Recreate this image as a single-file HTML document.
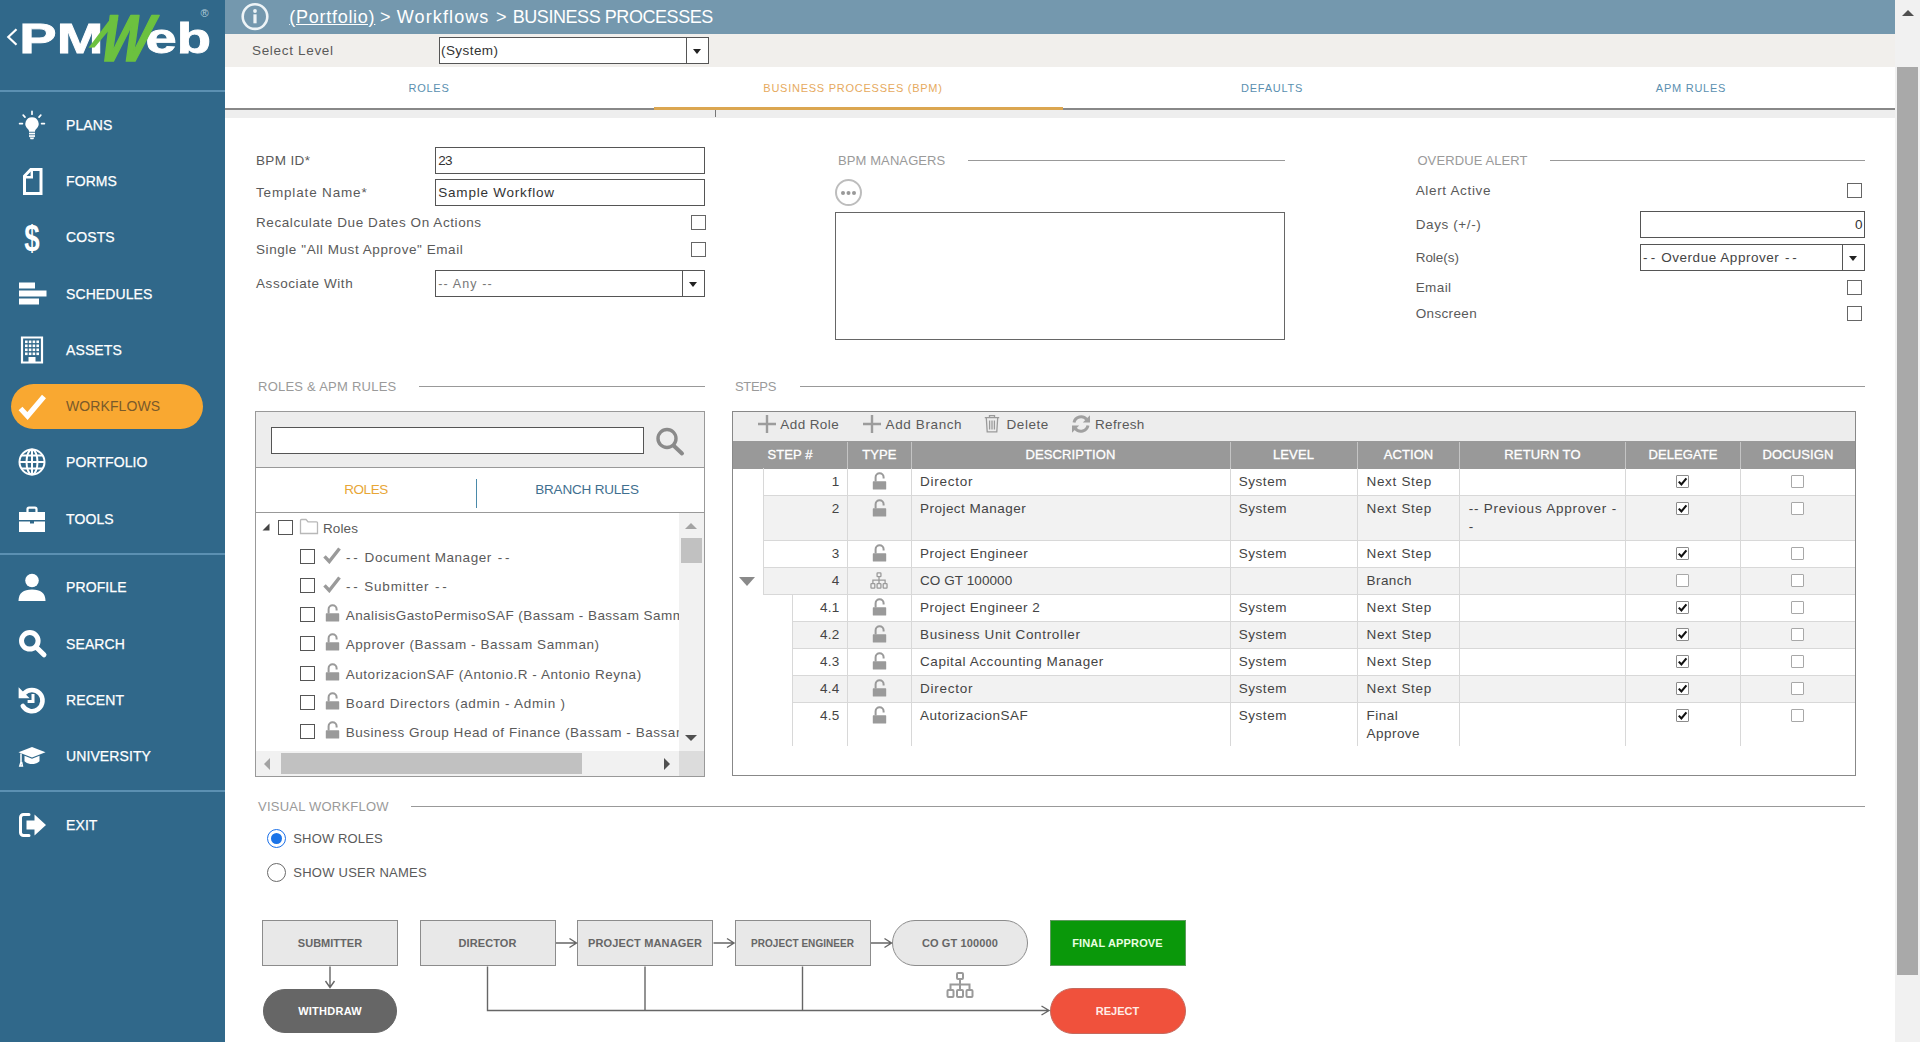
<!DOCTYPE html>
<html lang="en">
<head>
<meta charset="utf-8">
<title>PMWeb - Business Processes</title>
<style>
*{box-sizing:border-box;margin:0;padding:0}
html,body{width:1920px;height:1042px;overflow:hidden;background:#fff;font-family:"Liberation Sans",sans-serif;color:#555}
.abs,.abs-all *{position:absolute}
#page{position:relative;width:1920px;height:1042px;overflow:hidden}
/* ---------- sidebar ---------- */
#side{position:absolute;left:0;top:0;width:225px;height:1042px;background:#30688a}
#side .div{position:absolute;left:0;width:225px;height:2px;background:#5b90b2}
#side .it{position:absolute;left:0;width:225px;height:44px;color:#fff;font-size:14px;line-height:44px;letter-spacing:.1px}
#side .it span{position:absolute;left:66px;top:0;white-space:nowrap;-webkit-text-stroke:.25px #fff}
#side .it svg{position:absolute;left:16px;top:6px;width:32px;height:32px}
#side .act{left:11px;width:192px;height:45px;border-radius:23px;background:#f9a831}
#side .act span{left:55px;color:#7a5a2a;-webkit-text-stroke:0}
#side .act svg{left:5px}
/* ---------- header ---------- */
#hdr{position:absolute;left:225px;top:0;width:1670px;height:34px;background:#7498ae}
#crumb{position:absolute;left:64px;top:0;height:34px;line-height:34px;color:#fff;font-size:18px;white-space:nowrap;letter-spacing:.55px}
#lvl{position:absolute;left:225px;top:34px;width:1670px;height:33px;background:#f1efec}
.t13{font-size:13px;letter-spacing:.55px;white-space:nowrap;color:#5a5a5a}
.lbl{position:absolute;height:18px;line-height:18px}
.inp{position:absolute;border:1px solid #555;background:#fff;font-size:13px;color:#333;letter-spacing:.4px;white-space:nowrap;overflow:hidden}
.inp b{position:absolute;right:0;top:0;bottom:0;width:22px;border-left:1px solid #555;font-weight:normal}
.inp b:after{content:"";position:absolute;left:6px;top:50%;margin-top:-2px;border:4.5px solid transparent;border-top:5px solid #222;border-bottom:0}
.inp i{font-style:normal;position:absolute;left:3px;top:50%;transform:translateY(-50%)}
.cb{position:absolute;width:15px;height:15px;border:1px solid #666;background:#fff}
/* tabs */
#tabs{position:absolute;left:225px;top:67px;width:1670px;height:43px;background:#fff;border-bottom:2px solid #888}
#tabs span{position:absolute;top:13px;height:16px;line-height:16px;font-size:11px;letter-spacing:.75px;color:#5a8fb0;transform:translateX(-50%);white-space:nowrap}
#tabs .on{color:#e6aa5e}
#tabs u{position:absolute;left:429px;top:40px;width:409px;height:3px;background:#dba650}
#band{position:absolute;left:225px;top:110px;width:1670px;height:8px;background:#eee}
#band i{position:absolute;left:490px;top:0;width:1px;height:7px;background:#777}
/* page scrollbar */
#vsb{position:absolute;left:1895px;top:0;width:25px;height:1042px;background:#f1f1f1}
#vsb i{position:absolute;left:2px;top:67px;width:21px;height:908px;background:#a9a9a9}
#vsb b{position:absolute;left:7px;top:10px;border:6px solid transparent;border-bottom:6px solid #505050;border-top:0}
.tx{position:absolute;white-space:nowrap;height:18px;line-height:18px}
/* section titles */
.sec{position:absolute;font-size:13px;letter-spacing:.7px;color:#9a9a9a;white-space:nowrap;height:16px;line-height:16px}
.ln{position:absolute;height:1px;background:#999}
</style>
</head>
<body>
<div id="page">

<!-- ================= SIDEBAR ================= -->
<div id="side">
  <svg id="logo" style="position:absolute;left:0;top:0" width="225" height="80" viewBox="0 0 225 80">
    <path d="M16.500 29.200L8.300 37l8.200 7.800" fill="none" stroke="#fff" stroke-width="2.200"/>
    <text x="19.300" y="52.700" font-family="Liberation Sans, sans-serif" font-weight="bold" font-size="42" fill="#fff" stroke="#fff" stroke-width=".8" textLength="84" lengthAdjust="spacingAndGlyphs">PM</text>
    <text x="145.500" y="52.700" font-family="Liberation Sans, sans-serif" font-weight="bold" font-size="42" fill="#fff" stroke="#fff" stroke-width=".8" textLength="65.500" lengthAdjust="spacingAndGlyphs">eb</text>
    <path d="M88.500 47.800L112.500 16l6 3L94.500 47.500z" fill="#6cc13f"/>
    <text transform="translate(95.500 61.300) skewX(-18)" font-family="Liberation Sans, sans-serif" font-weight="bold" font-size="66" fill="#6cc13f" stroke="#6cc13f" stroke-width="1.600" stroke-linejoin="round" textLength="49" lengthAdjust="spacingAndGlyphs">W</text>
    <text x="200.500" y="17" font-family="Liberation Sans, sans-serif" font-size="11" fill="#b4ccda">®</text>
  </svg>
  <div class="it" style="top:103px"><svg viewBox="0 0 32 32"><g fill="#fff"><path d="M16 8.2a6.6 6.6 0 0 0-4.2 11.7c.8.7 1.2 1.5 1.2 2.4v.5h6v-.5c0-.9.4-1.7 1.2-2.4A6.600 6.600 0 0 0 16 8.200z"/><rect x="13" y="23.700" width="6" height="1.700"/><rect x="13" y="26.200" width="6" height="1.700"/><path d="M13.700 28.600h4.600l-.9 1.600h-2.800z"/></g><g stroke="#fff" stroke-width="1.700" stroke-linecap="round"><path d="M16 2.400v2.800M7.200 6.200l1.800 1.900M24.800 6.200l-1.800 1.900M3.600 14.600h2.800M25.600 14.600h2.800"/></g></svg><span>PLANS</span></div>
  <div class="it" style="top:159px"><svg viewBox="0 0 32 32"><path d="M14.800 4.500H25v24H8.500V11z" fill="none" stroke="#fff" stroke-width="3" stroke-linejoin="miter"/><path d="M15.800 4.500v7.800H8.500" fill="none" stroke="#fff" stroke-width="2.400"/></svg><span>FORMS</span></div>
  <div class="it" style="top:215px"><svg viewBox="0 0 32 32"><text x="8.300" y="29.500" font-family="Liberation Sans, sans-serif" font-weight="bold" font-size="36" fill="#fff" textLength="15.500" lengthAdjust="spacingAndGlyphs">$</text></svg><span>COSTS</span></div>
  <div class="it" style="top:272px"><svg viewBox="0 0 32 32"><g fill="#fff"><rect x="3" y="4.500" width="16" height="6"/><rect x="3" y="12.500" width="27.500" height="6"/><rect x="3" y="20.500" width="20" height="6"/></g></svg><span>SCHEDULES</span></div>
  <div class="it" style="top:328px"><svg viewBox="0 0 32 32"><path d="M6 3.500h20v25H6z" fill="none" stroke="#fff" stroke-width="2.200"/><g fill="#fff"><rect x="9" y="6.500" width="2.600" height="2.600"/><rect x="12.800" y="6.500" width="2.600" height="2.600"/><rect x="16.600" y="6.500" width="2.600" height="2.600"/><rect x="20.400" y="6.500" width="2.600" height="2.600"/><rect x="9" y="10.500" width="2.600" height="2.600"/><rect x="12.800" y="10.500" width="2.600" height="2.600"/><rect x="16.600" y="10.500" width="2.600" height="2.600"/><rect x="20.400" y="10.500" width="2.600" height="2.600"/><rect x="9" y="14.500" width="2.600" height="2.600"/><rect x="12.800" y="14.500" width="2.600" height="2.600"/><rect x="16.600" y="14.500" width="2.600" height="2.600"/><rect x="20.400" y="14.500" width="2.600" height="2.600"/><rect x="9" y="18.500" width="2.600" height="2.600"/><rect x="12.800" y="18.500" width="2.600" height="2.600"/><rect x="16.600" y="18.500" width="2.600" height="2.600"/><rect x="20.400" y="18.500" width="2.600" height="2.600"/><rect x="12.500" y="23" width="7" height="5"/></g></svg><span>ASSETS</span></div>
  <div class="it act" style="top:384px"><svg viewBox="0 0 32 32"><path d="M4.500 18.500l7 7.500L28 6.500" fill="none" stroke="#fff" stroke-width="5.200" stroke-linejoin="miter"/></svg><span>WORKFLOWS</span></div>
  <div class="it" style="top:440px"><svg viewBox="0 0 32 32"><g fill="none" stroke="#fff" stroke-width="2"><circle cx="16" cy="16" r="12.500"/><ellipse cx="16" cy="16" rx="5.500" ry="12.500"/><path d="M16 3.500v25M3.500 16h25M5.500 9.500h21M5.500 22.500h21"/></g></svg><span>PORTFOLIO</span></div>
  <div class="it" style="top:497px"><svg viewBox="0 0 32 32"><path d="M11.500 9V6.200a1.500 1.500 0 0 1 1.500-1.500h6a1.500 1.500 0 0 1 1.500 1.500V9" fill="none" stroke="#fff" stroke-width="2.200"/><path d="M3 9h26v8H3zM3 18.500h11v2h4v-2h11V29H3z" fill="#fff"/></svg><span>TOOLS</span></div>
  <div class="it" style="top:565px"><svg viewBox="0 0 32 32"><circle cx="16" cy="9.500" r="6.800" fill="#fff"/><path d="M2.500 30c0-8 5-11.500 13.500-11.500S29.500 22 29.500 30z" fill="#fff"/></svg><span>PROFILE</span></div>
  <div class="it" style="top:622px"><svg viewBox="0 0 32 32"><circle cx="13.800" cy="12.800" r="8.300" fill="none" stroke="#fff" stroke-width="5"/><path d="M20.500 19.500l7.500 7.300" stroke="#fff" stroke-width="5" stroke-linecap="round"/></svg><span>SEARCH</span></div>
  <div class="it" style="top:678px"><svg viewBox="0 0 32 32"><path d="M8 9.500A10.600 10.600 0 1 1 6.800 22" fill="none" stroke="#fff" stroke-width="4.600" stroke-linecap="round"/><path d="M2.600 3.200v11h11z" fill="#fff"/><path d="M17 10v7.400h-5.400" fill="none" stroke="#fff" stroke-width="3"/></svg><span>RECENT</span></div>
  <div class="it" style="top:734px"><svg viewBox="0 0 32 32"><path d="M16 7L2.500 12.200 16 17.400l13.500-5.200z" fill="#fff"/><path d="M8.500 15.800v5.400c2 2 4.600 2.800 7.500 2.800s5.500-.8 7.500-2.800v-5.400L16 18.800z" fill="#fff"/><path d="M5 13.500v8.500l-1.200 4h2.600L5.600 22" fill="none" stroke="#fff" stroke-width="1.500"/></svg><span>UNIVERSITY</span></div>
  <div class="it" style="top:803px"><svg viewBox="0 0 32 32"><path d="M13 5.500H7.500a3 3 0 0 0-3 3v15a3 3 0 0 0 3 3H13" fill="none" stroke="#fff" stroke-width="3" stroke-linecap="round"/><path d="M10.500 11.500h8v-6L30 16 18.500 26.500v-6h-8z" fill="#fff"/></svg><span>EXIT</span></div>
  <div class="div" style="top:90px"></div>
  <div class="div" style="top:553px"></div>
  <div class="div" style="top:790px"></div>
</div>

<!-- ================= HEADER ================= -->
<div id="hdr">
  <svg style="position:absolute;left:16px;top:3px" width="28" height="28" viewBox="0 0 28 28"><circle cx="14" cy="13.600" r="12.300" fill="none" stroke="#eef4f7" stroke-width="2.600"/><circle cx="14" cy="8" r="1.900" fill="#eef4f7"/><rect x="12.400" y="11.300" width="3.200" height="9" fill="#eef4f7"/></svg>
</div>
<div id="lvl"></div>

<div id="tabs">
  <span style="left:204px">ROLES</span>
  <span class="on" style="left:628px">BUSINESS PROCESSES (BPM)</span>
  <span style="left:1047px">DEFAULTS</span>
  <span style="left:1466px">APM RULES</span>
  <u></u>
</div>
<div id="band"><i></i></div>
<div id="vsb"><b></b><i></i></div>

<!-- breadcrumb -->
<div class="tx" style="left:289.2px;top:6px;font-size:18px;height:22px;line-height:22px;color:#fff;letter-spacing:0.74px;text-decoration:underline;">(Portfolio)</div>
<div class="tx" style="left:380px;top:6px;font-size:18px;height:22px;line-height:22px;color:#fff;letter-spacing:0.00px;">&gt;</div>
<div class="tx" style="left:396.8px;top:6px;font-size:18px;height:22px;line-height:22px;color:#fff;letter-spacing:1.11px;">Workflows</div>
<div class="tx" style="left:496px;top:6px;font-size:18px;height:22px;line-height:22px;color:#fff;letter-spacing:0.00px;">&gt;</div>
<div class="tx" style="left:512.7px;top:6px;font-size:18px;height:22px;line-height:22px;color:#fff;letter-spacing:-0.44px;">BUSINESS PROCESSES</div>
<!-- select level -->
<div class="tx" style="left:252px;top:42px;font-size:13.5px;color:#5a5a5a;letter-spacing:0.68px;">Select Level</div>
<div class="inp" style="left:439px;top:37px;width:270px;height:27px"><b></b></div>
<div class="tx" style="left:441px;top:42px;font-size:13.5px;color:#333;letter-spacing:0.43px;">(System)</div>
<!-- form -->
<div class="tx" style="left:256px;top:151.5px;font-size:13.5px;color:#5a5a5a;letter-spacing:0.37px;">BPM ID*</div>
<div class="tx" style="left:256px;top:183.5px;font-size:13.5px;color:#5a5a5a;letter-spacing:0.84px;">Template Name*</div>
<div class="tx" style="left:256px;top:213.5px;font-size:13.5px;color:#5a5a5a;letter-spacing:0.58px;">Recalculate Due Dates On Actions</div>
<div class="tx" style="left:256px;top:240.5px;font-size:13.5px;color:#5a5a5a;letter-spacing:0.57px;">Single "All Must Approve" Email</div>
<div class="tx" style="left:256px;top:274.5px;font-size:13.5px;color:#5a5a5a;letter-spacing:0.57px;">Associate With</div>
<div class="inp" style="left:435px;top:147px;width:270px;height:27px"></div>
<div class="tx" style="left:438.3px;top:151.5px;font-size:13.5px;color:#333;letter-spacing:-0.73px;">23</div>
<div class="inp" style="left:435px;top:179px;width:270px;height:27px"></div>
<div class="tx" style="left:438.3px;top:183.5px;font-size:13.5px;color:#333;letter-spacing:0.78px;">Sample Workflow</div>
<div class="cb" style="left:691px;top:215px"></div>
<div class="cb" style="left:691px;top:242px"></div>
<div class="inp" style="left:435px;top:270px;width:270px;height:27px"><b></b></div>
<div class="tx" style="left:438.3px;top:275px;font-size:12.5px;color:#777;letter-spacing:1.12px;">-- Any --</div>
<!-- bpm managers -->
<div class="tx" style="left:838px;top:151.5px;font-size:13px;color:#9a9a9a;letter-spacing:0.10px;">BPM MANAGERS</div>
<div class="ln" style="left:968px;top:160px;width:317px"></div>
<div style="position:absolute;left:835px;top:179px;width:27px;height:27px;border:2px solid #bdbdbd;border-radius:50%;background:#fff"><i style="position:absolute;left:4px;top:9.500px;width:4px;height:4px;border-radius:50%;background:#999;box-shadow:5.5px 0 0 #999,11px 0 0 #999"></i></div>
<div class="inp" style="left:835px;top:212px;width:450px;height:128px;border-color:#666"></div>
<!-- overdue alert -->
<div class="tx" style="left:1417.4px;top:151.5px;font-size:13px;color:#9a9a9a;letter-spacing:0.11px;">OVERDUE ALERT</div>
<div class="ln" style="left:1550px;top:160px;width:315px"></div>
<div class="tx" style="left:1415.7px;top:181.5px;font-size:13.5px;color:#5a5a5a;letter-spacing:0.66px;">Alert Active</div>
<div class="tx" style="left:1415.7px;top:215.5px;font-size:13.5px;color:#5a5a5a;letter-spacing:0.60px;">Days (+/-)</div>
<div class="tx" style="left:1415.7px;top:248.5px;font-size:13.5px;color:#5a5a5a;letter-spacing:-0.04px;">Role(s)</div>
<div class="tx" style="left:1415.7px;top:278.5px;font-size:13.5px;color:#5a5a5a;letter-spacing:0.41px;">Email</div>
<div class="tx" style="left:1415.7px;top:304.5px;font-size:13.5px;color:#5a5a5a;letter-spacing:0.35px;">Onscreen</div>
<div class="cb" style="left:1847px;top:183px"></div>
<div class="cb" style="left:1847px;top:280px"></div>
<div class="cb" style="left:1847px;top:306px"></div>
<div class="inp" style="left:1640px;top:211px;width:225px;height:27px"></div>
<div class="tx" style="right:57.5px;top:215.5px;font-size:13.5px;color:#333;letter-spacing:0.00px;">0</div>
<div class="inp" style="left:1640px;top:244px;width:225px;height:27px"><b></b></div>
<div class="tx" style="left:1643px;top:248.5px;font-size:13.5px;color:#444;letter-spacing:3.20px;">--</div>
<div class="tx" style="left:1661.2px;top:248.5px;font-size:13.5px;color:#444;letter-spacing:0.54px;">Overdue Approver</div>
<div class="tx" style="left:1785px;top:248.5px;font-size:13.5px;color:#444;letter-spacing:2.80px;">--</div>
<!-- roles & apm rules -->
<div class="tx" style="left:258px;top:377.5px;font-size:13px;color:#9a9a9a;letter-spacing:0.24px;">ROLES &amp; APM RULES</div>
<div class="ln" style="left:418.7px;top:386px;width:286.3px"></div>
<div style="position:absolute;left:255px;top:411px;width:450px;height:366px;border:1px solid #999;background:#fff"></div>
<div style="position:absolute;left:256px;top:412px;width:448px;height:56px;background:#ededed;border-bottom:1px solid #999"></div>
<div class="inp" style="left:271px;top:427px;width:373px;height:27px"></div>
<svg style="position:absolute;left:653px;top:425px" width="33" height="32" viewBox="0 0 33 32"><circle cx="14" cy="13.5" r="9" fill="none" stroke="#8a8a8a" stroke-width="3.4"/><path d="M20.5 20.5l8.500 8" stroke="#8a8a8a" stroke-width="4" stroke-linecap="round"/></svg>
<div class="tx" style="left:366px;transform:translateX(-50%);top:480.5px;font-size:13.5px;color:#e8a636;letter-spacing:-0.45px;">ROLES</div>
<div class="tx" style="left:587px;transform:translateX(-50%);top:480.5px;font-size:13.5px;color:#3f6f8f;letter-spacing:-0.19px;">BRANCH RULES</div>
<div style="position:absolute;left:476px;top:479px;width:1px;height:29px;background:#4a8aaa"></div>
<div style="position:absolute;left:256px;top:512px;width:448px;height:1px;background:#999"></div>
<svg style="position:absolute;left:262px;top:523px" width="8" height="8" viewBox="0 0 8 8"><path d="M7.500 .5v7h-7z" fill="#444"/></svg>
<div class="cb" style="left:278px;top:520px;border-color:#555"></div>
<svg style="position:absolute;left:299px;top:518px" width="20" height="17" viewBox="0 0 20 17"><path d="M1.500 15.500V2.500q0-1 1-1h4.500l2 2.300h8.500q1 0 1 1v10.700z" fill="#fff" stroke="#b8b8b8" stroke-width="1.300"/></svg>
<div class="tx" style="left:323px;top:519.5px;font-size:13.5px;color:#5a5a5a;letter-spacing:0.12px;">Roles</div>
<div style="position:absolute;left:256px;top:513px;width:423px;height:238px;overflow:hidden">
<div class="cb" style="left:44px;top:35.7px;border-color:#555"></div>
<svg style="position:absolute;left:67px;top:34.2px" width="18" height="17" viewBox="0 0 18 17"><path d="M1.500 9.300l4.800 5.200L16.500 1.500" fill="none" stroke="#9a9a9a" stroke-width="3.400"/></svg>
<div class="tx" style="left:90.1px;top:35.7px;font-size:13.5px;color:#5a5a5a;letter-spacing:2.70px;">--</div>
<div class="tx" style="left:108.6px;top:35.7px;font-size:13.5px;color:#5a5a5a;letter-spacing:0.54px;">Document Manager</div>
<div class="tx" style="left:241.7px;top:35.7px;font-size:13.5px;color:#5a5a5a;letter-spacing:2.70px;">--</div>
<div class="cb" style="left:44px;top:64.9px;border-color:#555"></div>
<svg style="position:absolute;left:67px;top:63.4px" width="18" height="17" viewBox="0 0 18 17"><path d="M1.500 9.300l4.800 5.200L16.500 1.500" fill="none" stroke="#9a9a9a" stroke-width="3.400"/></svg>
<div class="tx" style="left:90.1px;top:64.9px;font-size:13.5px;color:#5a5a5a;letter-spacing:2.70px;">--</div>
<div class="tx" style="left:108.2px;top:64.9px;font-size:13.5px;color:#5a5a5a;letter-spacing:0.83px;">Submitter</div>
<div class="tx" style="left:179.1px;top:64.9px;font-size:13.5px;color:#5a5a5a;letter-spacing:2.70px;">--</div>
<div class="cb" style="left:44px;top:94.1px;border-color:#555"></div>
<svg style="position:absolute;left:68.6px;top:91.1px" width="15" height="18" viewBox="0 0 15 18"><path d="M3.600 9.500V5.200a4 4 0 0 1 8 0V6.600" fill="none" stroke="#9a9a9a" stroke-width="2"/><rect x=".8" y="9.300" width="13.400" height="8.300" rx=".6" fill="#9a9a9a"/></svg>
<div class="tx" style="left:89.7px;top:94.1px;font-size:13.5px;color:#5a5a5a;letter-spacing:0.44px;">AnalisisGastoPermisoSAF (Bassam - Bassam Samman)</div>
<div class="cb" style="left:44px;top:123.3px;border-color:#555"></div>
<svg style="position:absolute;left:68.6px;top:120.3px" width="15" height="18" viewBox="0 0 15 18"><path d="M3.600 9.500V5.200a4 4 0 0 1 8 0V6.600" fill="none" stroke="#9a9a9a" stroke-width="2"/><rect x=".8" y="9.300" width="13.400" height="8.300" rx=".6" fill="#9a9a9a"/></svg>
<div class="tx" style="left:89.7px;top:123.3px;font-size:13.5px;color:#5a5a5a;letter-spacing:0.58px;">Approver (Bassam - Bassam Samman)</div>
<div class="cb" style="left:44px;top:152.5px;border-color:#555"></div>
<svg style="position:absolute;left:68.6px;top:149.5px" width="15" height="18" viewBox="0 0 15 18"><path d="M3.600 9.500V5.200a4 4 0 0 1 8 0V6.600" fill="none" stroke="#9a9a9a" stroke-width="2"/><rect x=".8" y="9.300" width="13.400" height="8.300" rx=".6" fill="#9a9a9a"/></svg>
<div class="tx" style="left:89.7px;top:152.5px;font-size:13.5px;color:#5a5a5a;letter-spacing:0.55px;">AutorizacionSAF (Antonio.R - Antonio Reyna)</div>
<div class="cb" style="left:44px;top:181.7px;border-color:#555"></div>
<svg style="position:absolute;left:68.6px;top:178.7px" width="15" height="18" viewBox="0 0 15 18"><path d="M3.600 9.500V5.200a4 4 0 0 1 8 0V6.600" fill="none" stroke="#9a9a9a" stroke-width="2"/><rect x=".8" y="9.300" width="13.400" height="8.300" rx=".6" fill="#9a9a9a"/></svg>
<div class="tx" style="left:89.7px;top:181.7px;font-size:13.5px;color:#5a5a5a;letter-spacing:0.73px;">Board Directors (admin - Admin )</div>
<div class="cb" style="left:44px;top:210.9px;border-color:#555"></div>
<svg style="position:absolute;left:68.6px;top:207.9px" width="15" height="18" viewBox="0 0 15 18"><path d="M3.600 9.500V5.200a4 4 0 0 1 8 0V6.600" fill="none" stroke="#9a9a9a" stroke-width="2"/><rect x=".8" y="9.300" width="13.400" height="8.300" rx=".6" fill="#9a9a9a"/></svg>
<div class="tx" style="left:89.7px;top:210.9px;font-size:13.5px;color:#5a5a5a;letter-spacing:0.54px;">Business Group Head of Finance (Bassam - Bassam Samman)</div>
</div>
<div style="position:absolute;left:679px;top:513px;width:25px;height:263px;background:#f1f1f1"></div>
<div style="position:absolute;left:681px;top:538px;width:21px;height:25px;background:#c1c1c1"></div>
<div style="position:absolute;left:685px;top:523px;border:6px solid transparent;border-top:0;border-bottom:6px solid #a3a3a3"></div>
<div style="position:absolute;left:685px;top:735px;border:6px solid transparent;border-bottom:0;border-top:6px solid #505050"></div>
<div style="position:absolute;left:256px;top:751px;width:423px;height:25px;background:#f1f1f1"></div>
<div style="position:absolute;left:281px;top:753px;width:301px;height:21px;background:#c1c1c1"></div>
<div style="position:absolute;left:264px;top:758px;border:6px solid transparent;border-left:0;border-right:6px solid #a3a3a3"></div>
<div style="position:absolute;left:664px;top:758px;border:6px solid transparent;border-right:0;border-left:6px solid #505050"></div>
<div style="position:absolute;left:679px;top:751px;width:25px;height:25px;background:#dcdcdc"></div>
<!-- steps -->
<div class="tx" style="left:735px;top:377.5px;font-size:13px;color:#9a9a9a;letter-spacing:-0.33px;">STEPS</div>
<div class="ln" style="left:800px;top:386px;width:1065px"></div>
<div style="position:absolute;left:732px;top:411px;width:1124px;height:365px;border:1px solid #888;background:#fff"></div>
<div style="position:absolute;left:733px;top:412px;width:1122px;height:29px;background:#ededed"></div>
<svg style="position:absolute;left:758px;top:415px" width="18" height="18" viewBox="0 0 18 18"><path d="M9 0v18M0 9h18" stroke="#9c9c9c" stroke-width="2.400"/></svg>
<div class="tx" style="left:780.3px;top:415.5px;font-size:13.5px;color:#5a5a5a;letter-spacing:0.41px;">Add Role</div>
<svg style="position:absolute;left:863px;top:415px" width="18" height="18" viewBox="0 0 18 18"><path d="M9 0v18M0 9h18" stroke="#9c9c9c" stroke-width="2.400"/></svg>
<div class="tx" style="left:885.6px;top:415.5px;font-size:13.5px;color:#5a5a5a;letter-spacing:0.61px;">Add Branch</div>
<svg style="position:absolute;left:984px;top:414px" width="16" height="19" viewBox="0 0 16 19"><g fill="none" stroke="#9a9a9a" stroke-width="1.300"><path d="M.8 3.600h14.400M5.500 3.400V1.600h5v1.800"/><path d="M2.300 3.800l.9 14h9.600l.9-14"/><path d="M5.600 6.500v9M8 6.500v9M10.400 6.500v9"/></g></svg>
<div class="tx" style="left:1006.5px;top:415.5px;font-size:13.5px;color:#5a5a5a;letter-spacing:0.57px;">Delete</div>
<svg style="position:absolute;left:1071px;top:414px" width="20" height="20" viewBox="0 0 20 20"><g fill="none" stroke="#a0a0a0" stroke-width="3"><path d="M3 8.500A7.200 7.200 0 0 1 15.600 5.400"/><path d="M17 11.500A7.200 7.200 0 0 1 4.400 14.600"/></g><path d="M19 1.200v7.200h-7.200z" fill="#a0a0a0"/><path d="M1 18.800v-7.200h7.200z" fill="#a0a0a0"/></svg>
<div class="tx" style="left:1095px;top:415.5px;font-size:13.5px;color:#5a5a5a;letter-spacing:0.35px;">Refresh</div>
<div style="position:absolute;left:733px;top:441px;width:1122px;height:28px;background:#999"></div>
<div style="position:absolute;left:847px;top:442px;width:1px;height:26px;background:#c4c4c4"></div>
<div style="position:absolute;left:911px;top:442px;width:1px;height:26px;background:#c4c4c4"></div>
<div style="position:absolute;left:1230px;top:442px;width:1px;height:26px;background:#c4c4c4"></div>
<div style="position:absolute;left:1357px;top:442px;width:1px;height:26px;background:#c4c4c4"></div>
<div style="position:absolute;left:1459px;top:442px;width:1px;height:26px;background:#c4c4c4"></div>
<div style="position:absolute;left:1625px;top:442px;width:1px;height:26px;background:#c4c4c4"></div>
<div style="position:absolute;left:1740px;top:442px;width:1px;height:26px;background:#c4c4c4"></div>
<div class="tx" style="left:790px;transform:translateX(-50%);top:445.5px;font-size:13px;color:#fff;letter-spacing:0.10px;-webkit-text-stroke:.3px #fff;">STEP #</div>
<div class="tx" style="left:879.4px;transform:translateX(-50%);top:445.5px;font-size:13px;color:#fff;letter-spacing:0.10px;-webkit-text-stroke:.3px #fff;">TYPE</div>
<div class="tx" style="left:1070.5px;transform:translateX(-50%);top:445.5px;font-size:13px;color:#fff;letter-spacing:0.10px;-webkit-text-stroke:.3px #fff;">DESCRIPTION</div>
<div class="tx" style="left:1293.5px;transform:translateX(-50%);top:445.5px;font-size:13px;color:#fff;letter-spacing:0.10px;-webkit-text-stroke:.3px #fff;">LEVEL</div>
<div class="tx" style="left:1408.5px;transform:translateX(-50%);top:445.5px;font-size:13px;color:#fff;letter-spacing:0.10px;-webkit-text-stroke:.3px #fff;">ACTION</div>
<div class="tx" style="left:1542.5px;transform:translateX(-50%);top:445.5px;font-size:13px;color:#fff;letter-spacing:0.10px;-webkit-text-stroke:.3px #fff;">RETURN TO</div>
<div class="tx" style="left:1683px;transform:translateX(-50%);top:445.5px;font-size:13px;color:#fff;letter-spacing:0.10px;-webkit-text-stroke:.3px #fff;">DELEGATE</div>
<div class="tx" style="left:1798px;transform:translateX(-50%);top:445.5px;font-size:13px;color:#fff;letter-spacing:0.10px;-webkit-text-stroke:.3px #fff;">DOCUSIGN</div>
<div style="position:absolute;left:763px;top:495px;width:1092px;height:45px;background:#f2f2f2"></div>
<div style="position:absolute;left:763px;top:567px;width:1092px;height:27px;background:#f2f2f2"></div>
<div style="position:absolute;left:792px;top:621px;width:1063px;height:27px;background:#f2f2f2"></div>
<div style="position:absolute;left:792px;top:675px;width:1063px;height:27px;background:#f2f2f2"></div>
<div style="position:absolute;left:763px;top:495px;width:1092px;height:1px;background:#d8d8d8"></div>
<div style="position:absolute;left:763px;top:468px;width:1px;height:27px;background:#d8d8d8"></div>
<div style="position:absolute;left:847px;top:468px;width:1px;height:27px;background:#d8d8d8"></div>
<div style="position:absolute;left:911px;top:468px;width:1px;height:27px;background:#d8d8d8"></div>
<div style="position:absolute;left:1230px;top:468px;width:1px;height:27px;background:#d8d8d8"></div>
<div style="position:absolute;left:1357px;top:468px;width:1px;height:27px;background:#d8d8d8"></div>
<div style="position:absolute;left:1459px;top:468px;width:1px;height:27px;background:#d8d8d8"></div>
<div style="position:absolute;left:1625px;top:468px;width:1px;height:27px;background:#d8d8d8"></div>
<div style="position:absolute;left:1740px;top:468px;width:1px;height:27px;background:#d8d8d8"></div>
<div style="position:absolute;left:763px;top:540px;width:1092px;height:1px;background:#d8d8d8"></div>
<div style="position:absolute;left:763px;top:495px;width:1px;height:45px;background:#d8d8d8"></div>
<div style="position:absolute;left:847px;top:495px;width:1px;height:45px;background:#d8d8d8"></div>
<div style="position:absolute;left:911px;top:495px;width:1px;height:45px;background:#d8d8d8"></div>
<div style="position:absolute;left:1230px;top:495px;width:1px;height:45px;background:#d8d8d8"></div>
<div style="position:absolute;left:1357px;top:495px;width:1px;height:45px;background:#d8d8d8"></div>
<div style="position:absolute;left:1459px;top:495px;width:1px;height:45px;background:#d8d8d8"></div>
<div style="position:absolute;left:1625px;top:495px;width:1px;height:45px;background:#d8d8d8"></div>
<div style="position:absolute;left:1740px;top:495px;width:1px;height:45px;background:#d8d8d8"></div>
<div style="position:absolute;left:763px;top:567px;width:1092px;height:1px;background:#d8d8d8"></div>
<div style="position:absolute;left:763px;top:540px;width:1px;height:27px;background:#d8d8d8"></div>
<div style="position:absolute;left:847px;top:540px;width:1px;height:27px;background:#d8d8d8"></div>
<div style="position:absolute;left:911px;top:540px;width:1px;height:27px;background:#d8d8d8"></div>
<div style="position:absolute;left:1230px;top:540px;width:1px;height:27px;background:#d8d8d8"></div>
<div style="position:absolute;left:1357px;top:540px;width:1px;height:27px;background:#d8d8d8"></div>
<div style="position:absolute;left:1459px;top:540px;width:1px;height:27px;background:#d8d8d8"></div>
<div style="position:absolute;left:1625px;top:540px;width:1px;height:27px;background:#d8d8d8"></div>
<div style="position:absolute;left:1740px;top:540px;width:1px;height:27px;background:#d8d8d8"></div>
<div style="position:absolute;left:763px;top:594px;width:1092px;height:1px;background:#d8d8d8"></div>
<div style="position:absolute;left:763px;top:567px;width:1px;height:27px;background:#d8d8d8"></div>
<div style="position:absolute;left:847px;top:567px;width:1px;height:27px;background:#d8d8d8"></div>
<div style="position:absolute;left:911px;top:567px;width:1px;height:27px;background:#d8d8d8"></div>
<div style="position:absolute;left:1230px;top:567px;width:1px;height:27px;background:#d8d8d8"></div>
<div style="position:absolute;left:1357px;top:567px;width:1px;height:27px;background:#d8d8d8"></div>
<div style="position:absolute;left:1459px;top:567px;width:1px;height:27px;background:#d8d8d8"></div>
<div style="position:absolute;left:1625px;top:567px;width:1px;height:27px;background:#d8d8d8"></div>
<div style="position:absolute;left:1740px;top:567px;width:1px;height:27px;background:#d8d8d8"></div>
<div style="position:absolute;left:792px;top:621px;width:1063px;height:1px;background:#d8d8d8"></div>
<div style="position:absolute;left:792px;top:594px;width:1px;height:27px;background:#d8d8d8"></div>
<div style="position:absolute;left:847px;top:594px;width:1px;height:27px;background:#d8d8d8"></div>
<div style="position:absolute;left:911px;top:594px;width:1px;height:27px;background:#d8d8d8"></div>
<div style="position:absolute;left:1230px;top:594px;width:1px;height:27px;background:#d8d8d8"></div>
<div style="position:absolute;left:1357px;top:594px;width:1px;height:27px;background:#d8d8d8"></div>
<div style="position:absolute;left:1459px;top:594px;width:1px;height:27px;background:#d8d8d8"></div>
<div style="position:absolute;left:1625px;top:594px;width:1px;height:27px;background:#d8d8d8"></div>
<div style="position:absolute;left:1740px;top:594px;width:1px;height:27px;background:#d8d8d8"></div>
<div style="position:absolute;left:792px;top:648px;width:1063px;height:1px;background:#d8d8d8"></div>
<div style="position:absolute;left:792px;top:621px;width:1px;height:27px;background:#d8d8d8"></div>
<div style="position:absolute;left:847px;top:621px;width:1px;height:27px;background:#d8d8d8"></div>
<div style="position:absolute;left:911px;top:621px;width:1px;height:27px;background:#d8d8d8"></div>
<div style="position:absolute;left:1230px;top:621px;width:1px;height:27px;background:#d8d8d8"></div>
<div style="position:absolute;left:1357px;top:621px;width:1px;height:27px;background:#d8d8d8"></div>
<div style="position:absolute;left:1459px;top:621px;width:1px;height:27px;background:#d8d8d8"></div>
<div style="position:absolute;left:1625px;top:621px;width:1px;height:27px;background:#d8d8d8"></div>
<div style="position:absolute;left:1740px;top:621px;width:1px;height:27px;background:#d8d8d8"></div>
<div style="position:absolute;left:792px;top:675px;width:1063px;height:1px;background:#d8d8d8"></div>
<div style="position:absolute;left:792px;top:648px;width:1px;height:27px;background:#d8d8d8"></div>
<div style="position:absolute;left:847px;top:648px;width:1px;height:27px;background:#d8d8d8"></div>
<div style="position:absolute;left:911px;top:648px;width:1px;height:27px;background:#d8d8d8"></div>
<div style="position:absolute;left:1230px;top:648px;width:1px;height:27px;background:#d8d8d8"></div>
<div style="position:absolute;left:1357px;top:648px;width:1px;height:27px;background:#d8d8d8"></div>
<div style="position:absolute;left:1459px;top:648px;width:1px;height:27px;background:#d8d8d8"></div>
<div style="position:absolute;left:1625px;top:648px;width:1px;height:27px;background:#d8d8d8"></div>
<div style="position:absolute;left:1740px;top:648px;width:1px;height:27px;background:#d8d8d8"></div>
<div style="position:absolute;left:792px;top:702px;width:1063px;height:1px;background:#d8d8d8"></div>
<div style="position:absolute;left:792px;top:675px;width:1px;height:27px;background:#d8d8d8"></div>
<div style="position:absolute;left:847px;top:675px;width:1px;height:27px;background:#d8d8d8"></div>
<div style="position:absolute;left:911px;top:675px;width:1px;height:27px;background:#d8d8d8"></div>
<div style="position:absolute;left:1230px;top:675px;width:1px;height:27px;background:#d8d8d8"></div>
<div style="position:absolute;left:1357px;top:675px;width:1px;height:27px;background:#d8d8d8"></div>
<div style="position:absolute;left:1459px;top:675px;width:1px;height:27px;background:#d8d8d8"></div>
<div style="position:absolute;left:1625px;top:675px;width:1px;height:27px;background:#d8d8d8"></div>
<div style="position:absolute;left:1740px;top:675px;width:1px;height:27px;background:#d8d8d8"></div>
<div style="position:absolute;left:792px;top:702px;width:1px;height:44px;background:#d8d8d8"></div>
<div style="position:absolute;left:847px;top:702px;width:1px;height:44px;background:#d8d8d8"></div>
<div style="position:absolute;left:911px;top:702px;width:1px;height:44px;background:#d8d8d8"></div>
<div style="position:absolute;left:1230px;top:702px;width:1px;height:44px;background:#d8d8d8"></div>
<div style="position:absolute;left:1357px;top:702px;width:1px;height:44px;background:#d8d8d8"></div>
<div style="position:absolute;left:1459px;top:702px;width:1px;height:44px;background:#d8d8d8"></div>
<div style="position:absolute;left:1625px;top:702px;width:1px;height:44px;background:#d8d8d8"></div>
<div style="position:absolute;left:1740px;top:702px;width:1px;height:44px;background:#d8d8d8"></div>
<div class="tx" style="right:1080.4px;top:472.5px;font-size:13.5px;color:#444;letter-spacing:0.30px;">1</div>
<svg style="position:absolute;left:871.5px;top:472px" width="15" height="18" viewBox="0 0 15 18"><path d="M3.600 9.500V5.200a4 4 0 0 1 8 0V6.600" fill="none" stroke="#9a9a9a" stroke-width="2"/><rect x=".8" y="9.300" width="13.400" height="8.300" rx=".6" fill="#9a9a9a"/></svg>
<div class="tx" style="left:920px;top:472.5px;font-size:13.5px;color:#444;letter-spacing:0.75px;">Director</div>
<div class="tx" style="left:1238.7px;top:472.5px;font-size:13.5px;color:#444;letter-spacing:0.56px;">System</div>
<div class="tx" style="left:1366.5px;top:472.5px;font-size:13.5px;color:#444;letter-spacing:0.68px;">Next Step</div>
<div style="position:absolute;left:1675.7px;top:475px;width:13px;height:13px;border:1.5px solid #8c8c8c;background:#fff;border-radius:1px"></div>
<svg style="position:absolute;left:1675.7px;top:475px" width="13" height="13" viewBox="0 0 13 13"><path d="M2.800 6.600l2.600 2.900 5-6.200" fill="none" stroke="#111" stroke-width="2.100"/></svg>
<div style="position:absolute;left:1790.7px;top:475px;width:13px;height:13px;border:1.5px solid #a8a8a8;background:#fff;border-radius:1px"></div>
<div class="tx" style="right:1080.4px;top:499.5px;font-size:13.5px;color:#444;letter-spacing:0.30px;">2</div>
<svg style="position:absolute;left:871.5px;top:499px" width="15" height="18" viewBox="0 0 15 18"><path d="M3.600 9.500V5.200a4 4 0 0 1 8 0V6.600" fill="none" stroke="#9a9a9a" stroke-width="2"/><rect x=".8" y="9.300" width="13.400" height="8.300" rx=".6" fill="#9a9a9a"/></svg>
<div class="tx" style="left:920px;top:499.5px;font-size:13.5px;color:#444;letter-spacing:0.47px;">Project Manager</div>
<div class="tx" style="left:1238.7px;top:499.5px;font-size:13.5px;color:#444;letter-spacing:0.56px;">System</div>
<div class="tx" style="left:1366.5px;top:499.5px;font-size:13.5px;color:#444;letter-spacing:0.68px;">Next Step</div>
<div class="tx" style="left:1468.7px;top:499.5px;font-size:13.5px;color:#444;letter-spacing:0.77px;">-- Previous Approver -</div>
<div class="tx" style="left:1468.7px;top:517.5px;font-size:13.5px;color:#444;letter-spacing:0.60px;">-</div>
<div style="position:absolute;left:1675.7px;top:502px;width:13px;height:13px;border:1.5px solid #8c8c8c;background:#fff;border-radius:1px"></div>
<svg style="position:absolute;left:1675.7px;top:502px" width="13" height="13" viewBox="0 0 13 13"><path d="M2.800 6.600l2.600 2.900 5-6.200" fill="none" stroke="#111" stroke-width="2.100"/></svg>
<div style="position:absolute;left:1790.7px;top:502px;width:13px;height:13px;border:1.5px solid #a8a8a8;background:#fff;border-radius:1px"></div>
<div class="tx" style="right:1080.4px;top:544.5px;font-size:13.5px;color:#444;letter-spacing:0.30px;">3</div>
<svg style="position:absolute;left:871.5px;top:544px" width="15" height="18" viewBox="0 0 15 18"><path d="M3.600 9.500V5.200a4 4 0 0 1 8 0V6.600" fill="none" stroke="#9a9a9a" stroke-width="2"/><rect x=".8" y="9.300" width="13.400" height="8.300" rx=".6" fill="#9a9a9a"/></svg>
<div class="tx" style="left:920px;top:544.5px;font-size:13.5px;color:#444;letter-spacing:0.53px;">Project Engineer</div>
<div class="tx" style="left:1238.7px;top:544.5px;font-size:13.5px;color:#444;letter-spacing:0.56px;">System</div>
<div class="tx" style="left:1366.5px;top:544.5px;font-size:13.5px;color:#444;letter-spacing:0.68px;">Next Step</div>
<div style="position:absolute;left:1675.7px;top:547px;width:13px;height:13px;border:1.5px solid #8c8c8c;background:#fff;border-radius:1px"></div>
<svg style="position:absolute;left:1675.7px;top:547px" width="13" height="13" viewBox="0 0 13 13"><path d="M2.800 6.600l2.600 2.900 5-6.200" fill="none" stroke="#111" stroke-width="2.100"/></svg>
<div style="position:absolute;left:1790.7px;top:547px;width:13px;height:13px;border:1.5px solid #a8a8a8;background:#fff;border-radius:1px"></div>
<div class="tx" style="right:1080.4px;top:571.5px;font-size:13.5px;color:#444;letter-spacing:0.30px;">4</div>
<svg style="position:absolute;left:870px;top:571.5px" width="18" height="17" viewBox="0 0 28 26"><g fill="none" stroke="#9a9a9a" stroke-width="2"><rect x="11" y="1" width="6" height="6" rx="1"/><rect x="1.500" y="18" width="6" height="7" rx="1"/><rect x="11" y="18" width="6" height="7" rx="1"/><rect x="20.500" y="18" width="6" height="7" rx="1"/><path d="M14 7v11M4.500 18v-5.500h19V18"/></g></svg>
<div class="tx" style="left:920px;top:571.5px;font-size:13.5px;color:#444;letter-spacing:0.08px;">CO GT 100000</div>
<div class="tx" style="left:1366.5px;top:571.5px;font-size:13.5px;color:#444;letter-spacing:0.44px;">Branch</div>
<div style="position:absolute;left:1675.7px;top:574px;width:13px;height:13px;border:1.5px solid #a8a8a8;background:#fff;border-radius:1px"></div>
<div style="position:absolute;left:1790.7px;top:574px;width:13px;height:13px;border:1.5px solid #a8a8a8;background:#fff;border-radius:1px"></div>
<div class="tx" style="right:1080.4px;top:598.5px;font-size:13.5px;color:#444;letter-spacing:0.30px;">4.1</div>
<svg style="position:absolute;left:871.5px;top:598px" width="15" height="18" viewBox="0 0 15 18"><path d="M3.600 9.500V5.200a4 4 0 0 1 8 0V6.600" fill="none" stroke="#9a9a9a" stroke-width="2"/><rect x=".8" y="9.300" width="13.400" height="8.300" rx=".6" fill="#9a9a9a"/></svg>
<div class="tx" style="left:920px;top:598.5px;font-size:13.5px;color:#444;letter-spacing:0.51px;">Project Engineer 2</div>
<div class="tx" style="left:1238.7px;top:598.5px;font-size:13.5px;color:#444;letter-spacing:0.56px;">System</div>
<div class="tx" style="left:1366.5px;top:598.5px;font-size:13.5px;color:#444;letter-spacing:0.68px;">Next Step</div>
<div style="position:absolute;left:1675.7px;top:601px;width:13px;height:13px;border:1.5px solid #8c8c8c;background:#fff;border-radius:1px"></div>
<svg style="position:absolute;left:1675.7px;top:601px" width="13" height="13" viewBox="0 0 13 13"><path d="M2.800 6.600l2.600 2.900 5-6.200" fill="none" stroke="#111" stroke-width="2.100"/></svg>
<div style="position:absolute;left:1790.7px;top:601px;width:13px;height:13px;border:1.5px solid #a8a8a8;background:#fff;border-radius:1px"></div>
<div class="tx" style="right:1080.4px;top:625.5px;font-size:13.5px;color:#444;letter-spacing:0.30px;">4.2</div>
<svg style="position:absolute;left:871.5px;top:625px" width="15" height="18" viewBox="0 0 15 18"><path d="M3.600 9.500V5.200a4 4 0 0 1 8 0V6.600" fill="none" stroke="#9a9a9a" stroke-width="2"/><rect x=".8" y="9.300" width="13.400" height="8.300" rx=".6" fill="#9a9a9a"/></svg>
<div class="tx" style="left:920px;top:625.5px;font-size:13.5px;color:#444;letter-spacing:0.66px;">Business Unit Controller</div>
<div class="tx" style="left:1238.7px;top:625.5px;font-size:13.5px;color:#444;letter-spacing:0.56px;">System</div>
<div class="tx" style="left:1366.5px;top:625.5px;font-size:13.5px;color:#444;letter-spacing:0.68px;">Next Step</div>
<div style="position:absolute;left:1675.7px;top:628px;width:13px;height:13px;border:1.5px solid #8c8c8c;background:#fff;border-radius:1px"></div>
<svg style="position:absolute;left:1675.7px;top:628px" width="13" height="13" viewBox="0 0 13 13"><path d="M2.800 6.600l2.600 2.900 5-6.200" fill="none" stroke="#111" stroke-width="2.100"/></svg>
<div style="position:absolute;left:1790.7px;top:628px;width:13px;height:13px;border:1.5px solid #a8a8a8;background:#fff;border-radius:1px"></div>
<div class="tx" style="right:1080.4px;top:652.5px;font-size:13.5px;color:#444;letter-spacing:0.30px;">4.3</div>
<svg style="position:absolute;left:871.5px;top:652px" width="15" height="18" viewBox="0 0 15 18"><path d="M3.600 9.500V5.200a4 4 0 0 1 8 0V6.600" fill="none" stroke="#9a9a9a" stroke-width="2"/><rect x=".8" y="9.300" width="13.400" height="8.300" rx=".6" fill="#9a9a9a"/></svg>
<div class="tx" style="left:920px;top:652.5px;font-size:13.5px;color:#444;letter-spacing:0.58px;">Capital Accounting Manager</div>
<div class="tx" style="left:1238.7px;top:652.5px;font-size:13.5px;color:#444;letter-spacing:0.56px;">System</div>
<div class="tx" style="left:1366.5px;top:652.5px;font-size:13.5px;color:#444;letter-spacing:0.68px;">Next Step</div>
<div style="position:absolute;left:1675.7px;top:655px;width:13px;height:13px;border:1.5px solid #8c8c8c;background:#fff;border-radius:1px"></div>
<svg style="position:absolute;left:1675.7px;top:655px" width="13" height="13" viewBox="0 0 13 13"><path d="M2.800 6.600l2.600 2.900 5-6.200" fill="none" stroke="#111" stroke-width="2.100"/></svg>
<div style="position:absolute;left:1790.7px;top:655px;width:13px;height:13px;border:1.5px solid #a8a8a8;background:#fff;border-radius:1px"></div>
<div class="tx" style="right:1080.4px;top:679.5px;font-size:13.5px;color:#444;letter-spacing:0.30px;">4.4</div>
<svg style="position:absolute;left:871.5px;top:679px" width="15" height="18" viewBox="0 0 15 18"><path d="M3.600 9.500V5.200a4 4 0 0 1 8 0V6.600" fill="none" stroke="#9a9a9a" stroke-width="2"/><rect x=".8" y="9.300" width="13.400" height="8.300" rx=".6" fill="#9a9a9a"/></svg>
<div class="tx" style="left:920px;top:679.5px;font-size:13.5px;color:#444;letter-spacing:0.75px;">Director</div>
<div class="tx" style="left:1238.7px;top:679.5px;font-size:13.5px;color:#444;letter-spacing:0.56px;">System</div>
<div class="tx" style="left:1366.5px;top:679.5px;font-size:13.5px;color:#444;letter-spacing:0.68px;">Next Step</div>
<div style="position:absolute;left:1675.7px;top:682px;width:13px;height:13px;border:1.5px solid #8c8c8c;background:#fff;border-radius:1px"></div>
<svg style="position:absolute;left:1675.7px;top:682px" width="13" height="13" viewBox="0 0 13 13"><path d="M2.800 6.600l2.600 2.900 5-6.200" fill="none" stroke="#111" stroke-width="2.100"/></svg>
<div style="position:absolute;left:1790.7px;top:682px;width:13px;height:13px;border:1.5px solid #a8a8a8;background:#fff;border-radius:1px"></div>
<div class="tx" style="right:1080.4px;top:706.5px;font-size:13.5px;color:#444;letter-spacing:0.30px;">4.5</div>
<svg style="position:absolute;left:871.5px;top:706px" width="15" height="18" viewBox="0 0 15 18"><path d="M3.600 9.500V5.200a4 4 0 0 1 8 0V6.600" fill="none" stroke="#9a9a9a" stroke-width="2"/><rect x=".8" y="9.300" width="13.400" height="8.300" rx=".6" fill="#9a9a9a"/></svg>
<div class="tx" style="left:920px;top:706.5px;font-size:13.5px;color:#444;letter-spacing:0.52px;">AutorizacionSAF</div>
<div class="tx" style="left:1238.7px;top:706.5px;font-size:13.5px;color:#444;letter-spacing:0.56px;">System</div>
<div class="tx" style="left:1366.5px;top:706.5px;font-size:13.5px;color:#444;letter-spacing:0.51px;">Final</div>
<div class="tx" style="left:1366.5px;top:724.5px;font-size:13.5px;color:#444;letter-spacing:0.47px;">Approve</div>
<div style="position:absolute;left:1675.7px;top:709px;width:13px;height:13px;border:1.5px solid #8c8c8c;background:#fff;border-radius:1px"></div>
<svg style="position:absolute;left:1675.7px;top:709px" width="13" height="13" viewBox="0 0 13 13"><path d="M2.800 6.600l2.600 2.900 5-6.200" fill="none" stroke="#111" stroke-width="2.100"/></svg>
<div style="position:absolute;left:1790.7px;top:709px;width:13px;height:13px;border:1.5px solid #a8a8a8;background:#fff;border-radius:1px"></div>
<div style="position:absolute;left:739px;top:576.500px;border:8.500px solid transparent;border-bottom:0;border-top:9px solid #8a8a8a"></div>
<!-- visual workflow -->
<div class="tx" style="left:258px;top:797.5px;font-size:13px;color:#9a9a9a;letter-spacing:0.23px;">VISUAL WORKFLOW</div>
<div class="ln" style="left:411px;top:806px;width:1454px"></div>
<div style="position:absolute;left:267px;top:829px;width:19px;height:19px;border-radius:50%;border:1.800px solid #1a6fe8;background:#fff"><i style="position:absolute;left:2.500px;top:2.500px;width:11px;height:11px;border-radius:50%;background:#1a73e8"></i></div>
<div style="position:absolute;left:267px;top:863px;width:19px;height:19px;border-radius:50%;border:1.300px solid #6a6a6a;background:#fff"></div>
<div class="tx" style="left:293.3px;top:829.5px;font-size:13px;color:#5a5a5a;letter-spacing:0.14px;">SHOW ROLES</div>
<div class="tx" style="left:293.3px;top:863.5px;font-size:13px;color:#5a5a5a;letter-spacing:0.24px;">SHOW USER NAMES</div>
<div style="position:absolute;left:262px;top:920px;width:136px;height:46px;background:#e8e8e8;border:1.300px solid #8c8c8c;border-radius:0px"></div>
<div class="tx" style="left:330px;transform:translateX(-50%);top:935.5px;font-size:11px;font-weight:700;height:14px;line-height:14px;color:#666;letter-spacing:0.02px;">SUBMITTER</div>
<div style="position:absolute;left:419.5px;top:920px;width:136px;height:46px;background:#e8e8e8;border:1.300px solid #8c8c8c;border-radius:0px"></div>
<div class="tx" style="left:487.5px;transform:translateX(-50%);top:935.5px;font-size:11px;font-weight:700;height:14px;line-height:14px;color:#666;letter-spacing:0.11px;">DIRECTOR</div>
<div style="position:absolute;left:577px;top:920px;width:136px;height:46px;background:#e8e8e8;border:1.300px solid #8c8c8c;border-radius:0px"></div>
<div class="tx" style="left:645px;transform:translateX(-50%);top:935.5px;font-size:11px;font-weight:700;height:14px;line-height:14px;color:#666;letter-spacing:0.15px;">PROJECT MANAGER</div>
<div style="position:absolute;left:734.5px;top:920px;width:136px;height:46px;background:#e8e8e8;border:1.300px solid #8c8c8c;border-radius:0px"></div>
<div class="tx" style="left:802.5px;transform:translateX(-50%);top:936.5px;font-size:10px;font-weight:700;height:14px;line-height:14px;color:#666;letter-spacing:0.05px;">PROJECT ENGINEER</div>
<div style="position:absolute;left:892px;top:920px;width:136px;height:46px;background:#e8e8e8;border:1.300px solid #8c8c8c;border-radius:23px"></div>
<div class="tx" style="left:960px;transform:translateX(-50%);top:935.5px;font-size:11px;font-weight:700;height:14px;line-height:14px;color:#666;letter-spacing:0.13px;">CO GT 100000</div>
<div style="position:absolute;left:1049.5px;top:920px;width:136px;height:46px;background:#0a980a;border:1.300px solid #5f9a5f;border-radius:0px"></div>
<div class="tx" style="left:1117.5px;transform:translateX(-50%);top:935.5px;font-size:11px;font-weight:700;height:14px;line-height:14px;color:#e8ffe0;letter-spacing:0.16px;">FINAL APPROVE</div>
<div style="position:absolute;left:1049.5px;top:988px;width:136px;height:46px;background:#f0513c;border:1.300px solid #c46a5e;border-radius:23px"></div>
<div class="tx" style="left:1117.5px;transform:translateX(-50%);top:1003.5px;font-size:11px;font-weight:700;height:14px;line-height:14px;color:#ffece6;letter-spacing:0.02px;">REJECT</div>
<div style="position:absolute;left:263px;top:988.5px;width:134px;height:44px;background:#666;border:1.300px solid #666;border-radius:22px"></div>
<div class="tx" style="left:330px;transform:translateX(-50%);top:1004px;font-size:11px;font-weight:700;height:14px;line-height:14px;color:#fff;letter-spacing:0.25px;">WITHDRAW</div>
<svg style="position:absolute;left:240px;top:900px" width="1000" height="142" viewBox="240 900 1000 142"><g fill="none" stroke="#666" stroke-width="1.400"><path d="M330 966.500V987.500M325.500 981l4.500 6.500 4.500-6.500"/><path d="M556 943H576.500M569.500 938.500l7 4.500-7 4.500"/><path d="M713.500 943H734M727 938.500l7 4.500-7 4.500"/><path d="M871 943H891.500M884.500 938.500l7 4.500-7 4.500"/><path d="M487.500 966.500V1010.500H1049M645 966.500V1010.500M802.500 966.500V1010.500M1041.500 1006l7.500 4.500-7.500 4.500"/></g></svg>
<svg style="position:absolute;left:946px;top:972px" width="28" height="26" viewBox="0 0 28 26"><g fill="none" stroke="#9a9a9a" stroke-width="2"><rect x="11" y="1" width="6" height="6" rx="1"/><rect x="1.500" y="18" width="6" height="7" rx="1"/><rect x="11" y="18" width="6" height="7" rx="1"/><rect x="20.500" y="18" width="6" height="7" rx="1"/><path d="M14 7v11M4.500 18v-5.500h19V18"/></g></svg>


</div>
</body>
</html>
